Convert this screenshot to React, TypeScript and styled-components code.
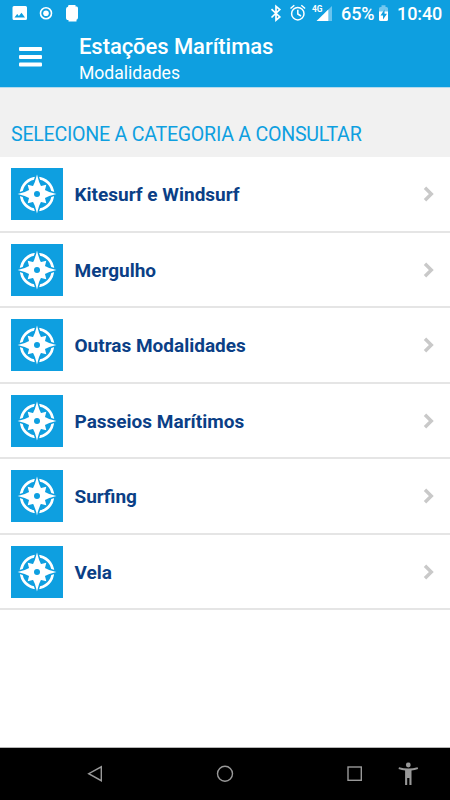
import React from "react";
import styled, { createGlobalStyle } from "styled-components";

const GlobalStyle = createGlobalStyle`
  * { box-sizing: border-box; }
  body { margin: 0; background: #fff; font-family: Roboto, sans-serif; }
`;

const BLUE = "#0e9fe0";

const Screen = styled.div`
  display: flex;
  flex-direction: column;
  width: 450px;
  height: 800px;
  overflow: hidden;
  background: #fff;
`;

const StatusBar = styled.div`
  display: flex;
  justify-content: space-between;
  height: 27px;
  flex: none;
  background: ${BLUE};
  color: #fff;
`;

const StatusIcon = styled.svg`
  display: block;
  flex: none;
  height: 27px;
`;

const StatusGroup = styled.div`
  display: flex;
`;

const StatusText = styled.span<{ $width: number }>`
  width: ${(p) => p.$width}px;
  font-size: 18px;
  font-weight: 500;
  line-height: 28px;
  letter-spacing: -0.1px;
  white-space: nowrap;
`;

const Header = styled.header`
  display: flex;
  flex: none;
  height: 60px;
  background: ${BLUE};
  color: #fff;
`;

const MenuButton = styled.button`
  width: 79px;
  height: 60px;
  padding: 0 0 0 19px;
  border: 0;
  background: none;
  svg { display: block; }
`;

const Titles = styled.div`
  padding-top: 6px;
`;

const Title = styled.h1`
  margin: 0;
  font-size: 22px;
  font-weight: 500;
  line-height: 27px;
  letter-spacing: -0.06px;
  white-space: nowrap;
`;

const Subtitle = styled.div`
  font-size: 17.6px;
  line-height: 26px;
  letter-spacing: -0.03px;
`;

const SectionHeading = styled.h2`
  flex: none;
  height: 70px;
  margin: 0;
  padding: 33px 11px 0;
  border-top: 1px solid #b4dbee;
  background: #f1f1f1;
  color: ${BLUE};
  font-size: 19.6px;
  font-weight: 400;
  line-height: 27px;
  letter-spacing: -0.25px;
  white-space: nowrap;
`;

const List = styled.ul`
  flex: 1;
  margin: 0;
  padding: 0;
  list-style: none;
`;

const Row = styled.li`
  display: flex;
  align-items: center;
  height: 75.5px;
  padding: 0.5px 15px 0 11px;
  border-bottom: 2px solid #e5e5e5;
`;

const Tile = styled.div`
  width: 52px;
  height: 52px;
  margin-right: 11.5px;
  background: ${BLUE};
  svg { display: block; }
`;

const Label = styled.span`
  flex: 1;
  padding-top: 1.5px;
  color: #0b3f86;
  font-size: 19px;
  font-weight: 700;
`;

const NavBar = styled.nav`
  display: flex;
  flex: none;
  height: 53px;
  border-top: 1px solid #b5b5b5;
  background: #000;
`;

const NavButton = styled.div<{ $gap: number }>`
  margin-left: ${(p) => p.$gap}px;
  width: 24px;
  height: 52px;
  svg { display: block; }
`;

const Compass = () => (
  <svg width="52" height="52" viewBox="-26 -26 52 52">
    <circle r="15.900" fill="none" stroke="#fff" strokeWidth="2.700" />
    <path
      d="M0 -20 L5 -5 L20 0 L5 5 L0 20 L-5 5 L-20 0 L-5 -5 Z"
      fill={BLUE}
      stroke={BLUE}
      strokeWidth="2.200"
    />
    <path fill="#fff" d="M-9.300 -9.300 L0 -7 L9.300 -9.300 L7 0 L9.300 9.300 L0 7 L-9.300 9.300 L-7 0 Z" />
    <path fill="#fff" d="M0 -19.400 Q1.800 -11 5.200 -5.200 Q11 -1.800 19.400 0 Q11 1.800 5.200 5.200 Q1.800 11 0 19.400 Q-1.800 11 -5.200 5.200 Q-11 1.800 -19.400 0 Q-11 -1.800 -5.200 -5.200 Q-1.800 -11 0 -19.400 Z" />
    <circle r="3" fill={BLUE} />
  </svg>
);

const Chevron = () => (
  <svg width="12" height="18" viewBox="0 0 12 18">
    <path d="M2 2.800 L8.300 9 L2 15.200" fill="none" stroke="#c9c9c9" strokeWidth="3.400" />
  </svg>
);

const categories = [
  "Kitesurf e Windsurf",
  "Mergulho",
  "Outras Modalidades",
  "Passeios Marítimos",
  "Surfing",
  "Vela",
];

export default function App() {
  return (
    <Screen>
      <GlobalStyle />
      <StatusBar>
        <StatusIcon width="90" viewBox="0 0 90 27">
          <path
            fill="#fff"
            fillRule="evenodd"
            d="M14 6h11.500q1.500 0 1.500 1.500v11q0 1.500-1.500 1.500h-11.500q-1.500 0-1.500-1.500v-11q0-1.500 1.500-1.500z M14.500 17.500h10.500l-3.500-4.700-2.600 3.300-1.700-2z"
          />
          <circle cx="46" cy="13.300" r="5.500" fill="none" stroke="#fff" strokeWidth="1.600" />
          <circle cx="46" cy="13.300" r="2.800" fill="#fff" />
          <path fill="#fff" d="M68.500 5h7v1.500h1.300q1.200.2 1.200 2v9q0 2-1.500 2.300v1.700h-8v-1.500h-1.300q-1.200-.3-1.200-2v-9q0-2 2-2.200z" />
        </StatusIcon>
        <StatusGroup>
          <StatusIcon width="73" viewBox="268 0 73 27">
            <path d="M271.500 9.200 L279.800 16.900 L276 20.200 V6.300 L279.800 9.500 L271.500 17.500" fill="none" stroke="#fff" strokeWidth="1.700" />
            <circle cx="297.800" cy="13.700" r="6.200" fill="none" stroke="#fff" strokeWidth="1.500" />
            <path d="M297.800 9.800 V14 L301 16 M290.500 8.500 L294.300 5.300 M301.300 5.300 L305.100 8.500" fill="none" stroke="#fff" strokeWidth="1.500" />
            <text x="312" y="12" fontFamily="Roboto, sans-serif" fontSize="9" fontWeight="700" fill="#fff" textLength="10.500" lengthAdjust="spacingAndGlyphs">4G</text>
            <path d="M325 12.800 L332 6 V21 H325 Z" fill="#6ac4ee" />
            <path d="M328.300 9.500 V21 H316.500 Z" fill="#fff" />
          </StatusIcon>
          <StatusText $width={36}>65%</StatusText>
          <StatusIcon width="20" viewBox="377 0 20 27">
            <path fill="#73c8ef" d="M379 8.500q0-1.500 1.500-1.500h1v-1.700h4v1.700h1q1.500 0 1.500 1.500v4h-9z" />
            <path fill="#fff" d="M379 11.500h9v8q0 1.500-1.500 1.500h-6q-1.500 0-1.500-1.500z" />
            <path fill={BLUE} d="M384.500 9.500 L380.500 15.500 H383 V19.500 L387 13.700 H384.500 Z" />
          </StatusIcon>
          <StatusText $width={53}>10:40</StatusText>
        </StatusGroup>
      </StatusBar>
      <Header>
        <MenuButton aria-label="Menu">
          <svg width="24" height="24" viewBox="0 0 24 24" fill="#fff">
            <rect y="2" width="23" height="4" rx="1" />
            <rect y="10" width="23" height="4" rx="1" />
            <rect y="17.500" width="23" height="4" rx="1" />
          </svg>
        </MenuButton>
        <Titles>
          <Title>Estações Marítimas</Title>
          <Subtitle>Modalidades</Subtitle>
        </Titles>
      </Header>
      <SectionHeading>SELECIONE A CATEGORIA A CONSULTAR</SectionHeading>
      <List>
        {categories.map((name) => (
          <Row key={name}>
            <Tile><Compass /></Tile>
            <Label>{name}</Label>
            <Chevron />
          </Row>
        ))}
      </List>
      <NavBar>
        <NavButton $gap={83}>
          <svg width="24" height="52" viewBox="83 748 24 52">
            <path d="M101.300 766.800 V780.700 L88.700 773.700 Z" fill="none" stroke="#999" strokeWidth="1.400" />
          </svg>
        </NavButton>
        <NavButton $gap={106}>
          <svg width="24" height="52" viewBox="213 748 24 52">
            <circle cx="225" cy="773.700" r="7.500" fill="none" stroke="#999" strokeWidth="1.400" />
          </svg>
        </NavButton>
        <NavButton $gap={106}>
          <svg width="24" height="52" viewBox="343 748 24 52">
            <rect x="348" y="767" width="13.300" height="13.300" fill="none" stroke="#999" strokeWidth="1.400" />
          </svg>
        </NavButton>
        <NavButton $gap={29}>
          <svg width="24" height="52" viewBox="396 748 24 52" fill="#999">
            <circle cx="408.300" cy="765" r="2.400" />
            <path d="M399 767.200 Q408.300 769.800 417.600 767.200 L418.100 769.100 Q414.500 770.200 411.500 770.500 V785 H409.400 V778 H407.200 V785 H405.100 V770.500 Q402 770.200 398.500 769.100 Z" />
          </svg>
        </NavButton>
      </NavBar>
    </Screen>
  );
}
